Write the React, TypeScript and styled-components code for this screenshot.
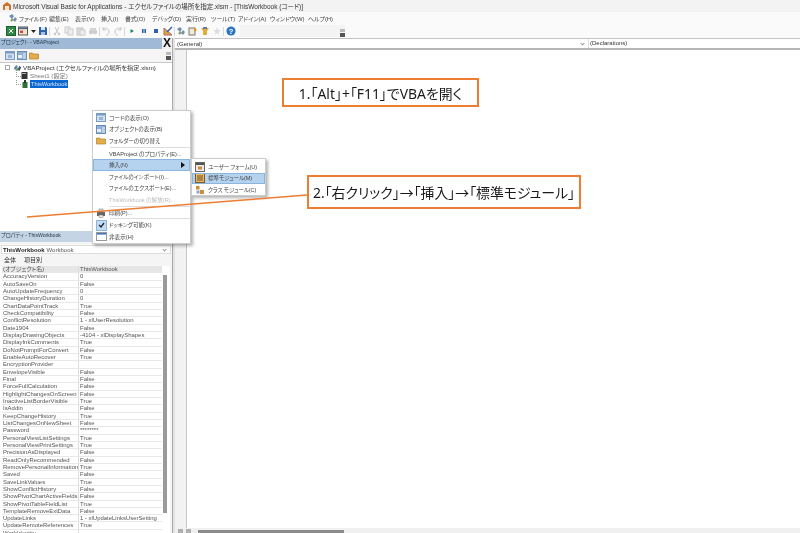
import React from 'react';
import styled, { createGlobalStyle } from 'styled-components';

const Global = createGlobalStyle`
  html, body { margin: 0; padding: 0; background: #fff; }
  #root { width: 800px; height: 533px; overflow: hidden; }
  * { box-sizing: border-box; }
`;
const UI = `"Liberation Sans", "Noto Sans CJK JP", sans-serif`;

const Page = styled.div`
  position: relative; width: 800px; height: 533px; overflow: hidden;
  display: flex; flex-direction: column; font-family: ${UI}; font-size: 6px; color: #333;
  font-feature-settings: "palt"; filter: blur(0.3px);
`;
const TitleBar = styled.div`
  height: 12px; flex: none; background: #f3f3f3; display: flex; align-items: center; gap: 0; padding-left: 2px;
  font-size: 6.5px; color: #333; white-space: nowrap;
`;
const TitleIcon = styled.svg` margin-right: 1px; flex: none; `;
const MenuBar = styled.div`
  height: 13px; flex: none; background: #fafafa; display: flex; align-items: center; padding: 0 0 1px 6px; white-space: nowrap;
`;
const MenuItem = styled.span<{ $w: number }>` width: ${p => p.$w}px; flex: none; color: #444; font-size: 5.9px; `;
const ToolBar = styled.div`
  height: 13px; flex: none; background: #fafafa; display: flex; align-items: center; padding: 0 0 1px 6px; gap: 2px;
`;
const ToolIcon = styled.span<{ $w?: number }>` width: ${p => p.$w ?? 10}px; height: 10px; flex: none; display: flex; align-items: center; justify-content: center; `;
const ToolSep = styled.span` width: 1px; height: 9px; background: #d8d8d8; flex: none; margin: 0 -.75px; `;
const ToolRest = styled.span`
  width: 105px; height: 12px; flex: none; background: #f4f4f4; margin-left: 2px; display: flex; justify-content: flex-end; align-items: flex-end; padding-right: 0;
`;
const Grip = styled.span` width: 5px; height: 8px; flex: none; background: linear-gradient(#bbb 0 3px, transparent 3px 4px, #555 4px); `;
const Main = styled.div` flex: 1; min-height: 0; display: flex; background: #d4d4d4; `;
const LeftColumn = styled.div` width: 172px; flex: none; display: flex; flex-direction: column; background: #f5f5f5; `;
const PaneHeader = styled.div`
  height: 11px; flex: none; background: #9fb9d6; display: flex; align-items: center; justify-content: space-between; font-size: 5.2px; letter-spacing: -.05px; padding-left: 1px;
  color: #26384d; line-height: 8px;
`;
const HeaderLabel = styled.span` align-self: flex-start; padding-top: 0; `;
const CloseBox = styled.span` width: 10px; height: 11px; background: #f0f0f0; color: #111; font: bold 12px/11px "Liberation Sans", sans-serif; letter-spacing: 0; text-align: center; `;
const ProjectTools = styled.div` height: 13px; flex: none; display: flex; align-items: center; gap: 2px; padding: 0 1px 0 5px; background: #f5f5f5; `;
const Spacer = styled.span` flex: 1; `;
const Tree = styled.div` height: 169px; flex: none; background: #fff; border-top: 1px solid #c8c8c8; padding: 0 0 0 5px; `;
const TreeRow = styled.div<{ $indent: number }>` height: 8.6px; display: flex; align-items: center; gap: 1px; padding-left: ${p => p.$indent}px; white-space: nowrap; color: #333; font-size: 6.2px; `;
const Branch = styled.span` width: 5px; height: 5px; flex: none; align-self: flex-start; border-left: 1px dotted #999; border-bottom: 1px dotted #999; margin-right: -1px; `;
const Selected = styled.span` background: #0a66d0; color: #dbe9fb; padding: 0 1px; line-height: 8px; font-size: 5.7px; `;
const Muted = styled.span` color: #777; `;
const Expander = styled.span` width: 5px; height: 5px; border: 1px solid #aaa; margin-right: 2px; flex: none; `;
const PropsHeader = styled(PaneHeader)` background: #c5d4e5; `;
const PropsPanel = styled.div` flex: 1; min-height: 0; display: flex; flex-direction: column; overflow: hidden; `;
const ObjectCombo = styled.div`
  height: 9px; margin: 3px 1px 0 1px; background: #fff; border: 1px solid #ddd; display: flex; align-items: center; justify-content: space-between; padding: 0 2px 0 1px; flex: none; color: #555; white-space: nowrap;
`;
const Bold = styled.b` color: #222; margin-right: 2px; `;
const Chevron = styled.span` width: 3px; height: 3px; border: solid #999; border-width: 0 1px 1px 0; transform: rotate(45deg); margin: 0 2px 1px; flex: none; `;
const Tabs = styled.div` height: 12px; flex: none; display: flex; gap: 8px; align-items: center; padding: 0 0 1px 4px; font-size: 6px; color: #333; `;
const PropsBody = styled.div` flex: 1; min-height: 0; display: flex; background: #fff; margin-right: 2px; `;
const Grid = styled.div` width: 160px; flex: none; margin-left: 2px; `;
const PropRow = styled.div<{ $sel?: boolean }>`
  height: 7.33px; display: grid; grid-template-columns: 77px 1fr; font-size: 5.95px; line-height: 7.2px; color: #555; white-space: nowrap;
  background: ${p => (p.$sel ? '#e6e6e6' : '#fff')};
  border-bottom: 0.5px solid #e8e8e8;
`;
const PropName = styled.span` border-right: 1px solid #dcdcdc; padding-left: 1px; overflow: hidden; `;
const PropValue = styled.span` padding-left: 1px; overflow: hidden; `;
const ScrollTrack = styled.div` width: 8px; flex: none; background: #fff; padding: 9px 3px 20px 1px; `;
const ScrollThumb = styled.div` height: 100%; background: #9a9a9a; `;
const Splitter = styled.div` width: 3px; flex: none; background: #e2e2e2; border-left: 1px solid #aaa; `;
const CodePane = styled.div` flex: 1; min-width: 0; display: flex; flex-direction: column; background: #fff; `;
const ComboRow = styled.div` height: 12px; flex: none; display: flex; background: #fff; border-top: 1px solid #c4c4c4; border-bottom: 2px solid #b5b5b5; `;
const Combo = styled.div<{ $w: number }>` width: ${p => p.$w}px; flex: none; display: flex; align-items: center; justify-content: space-between; padding: 0 2px; color: #333; border-right: 1px solid #ddd; font-size: 6px; `;
const ComboLast = styled.div` flex: 1; padding-left: 1px; line-height: 9px; color: #333; font-size: 6px; `;
const EditorArea = styled.div` flex: 1; display: flex; min-height: 0; `;
const Margin = styled.div` width: 12px; flex: none; background: #f2f2f2; border-right: 1px solid #c8c8c8; `;
const Editor = styled.div` flex: 1; background: #fff; `;
const BottomBar = styled.div` height: 5px; flex: none; background: #f0f0f0; display: flex; align-items: flex-end; padding-left: 3px; `;
const ViewButton = styled.span` width: 5px; height: 4px; background: #b0b0b0; flex: none; margin-right: 3px; `;
const HScrollThumb = styled.span` width: 146px; height: 3px; background: #8a8a8a; flex: none; margin-left: 4px; `;

const ContextMenu = styled.div`
  position: absolute; left: 92px; top: 110px; width: 99px; height: 134px; background: #fff; border: 1px solid #ccc; padding-top: 1px;
  box-shadow: 2px 2px 3px rgba(0,0,0,.3); display: flex; flex-direction: column; color: #444;
`;
const Sub = styled(ContextMenu)` left: 191px; top: 158px; width: 75px; height: 38px; padding-top: 2px; letter-spacing: -.15px; `;
const MenuRow = styled.div<{ $hot?: boolean; $off?: boolean }>`
  height: 11.6px; flex: none; display: flex; align-items: center; white-space: nowrap; font-size: 5.6px; position: relative;
  color: ${p => (p.$off ? '#bbb' : '#444')};
  background: ${p => (p.$hot ? '#b5d3ee' : 'transparent')};
  outline: ${p => (p.$hot ? '1px solid #8ab6de' : 'none')}; outline-offset: -1px;
`;
const MenuGlyph = styled.span<{ $w: number }>` width: ${p => p.$w}px; flex: none; display: flex; justify-content: center; align-items: center; `;
const Arrow = styled.span` position: absolute; right: 5px; top: 3px; width: 0; height: 0; border-left: 4px solid #111; border-top: 3px solid transparent; border-bottom: 3px solid transparent; `;
const MenuSep = styled.div` height: 1px; margin: 0 0 0 17px; background: #ddd; flex: none; `;
const Check = styled.span` width: 11px; height: 11px; background: #c4dcf2; border: 1px solid #8ab6de; display: flex; align-items: center; justify-content: center; `;

const Callout = styled.div<{ $l: number; $t: number; $w: number; $h: number }>`
  position: absolute; left: ${p => p.$l}px; top: ${p => p.$t}px; width: ${p => p.$w}px; height: ${p => p.$h}px;
  background: #fff; border: 2px solid #ed7d31; font-family: "Noto Sans", "Noto Sans CJK JP", sans-serif; font-size: 13.9px; color: #1a1a1a; display: flex; align-items: center; justify-content: center; white-space: nowrap;
`;
const LeaderLine = styled.svg` position: absolute; left: 0; top: 0; pointer-events: none; `;

type IcoProps = { k: string };
const Ico: React.FC<IcoProps> = ({ k }) => {
  switch (k) {
    case 'excel': return <svg width="10" height="10" viewBox="0 0 10 10"><rect x=".5" y=".5" width="9" height="9" fill="#2f8a46" stroke="#1f5e30"/><path d="M3 3l4 4M7 3L3 7" stroke="#fff"/></svg>;
    case 'form': return <svg width="10" height="10" viewBox="0 0 10 10"><rect x=".5" y="1" width="9" height="8" fill="#f2e3c8" stroke="#555"/><rect x="1" y="1.5" width="8" height="1.6" fill="#45688f"/><rect x="2" y="4.5" width="3" height="2.5" fill="#c0504d"/></svg>;
    case 'save': return <svg width="10" height="10" viewBox="0 0 10 10"><path d="M1 1h7l1 1v7H1z" fill="#2e62b0"/><rect x="3" y="1" width="4" height="3" fill="#dbe6f5"/><rect x="3" y="6" width="4" height="3" fill="#a9c0e0"/></svg>;
    case 'caret': return <svg width="5" height="10" viewBox="0 0 5 10"><path d="M0 4h5L2.5 7z" fill="#222"/></svg>;
    case 'cut': return <svg width="10" height="10" viewBox="0 0 10 10"><path d="M3 1l3 6M7 1L4 7" stroke="#c8c8c8" fill="none"/><circle cx="3" cy="8" r="1.2" fill="#c8c8c8"/><circle cx="7" cy="8" r="1.2" fill="#c8c8c8"/></svg>;
    case 'copy': return <svg width="10" height="10" viewBox="0 0 10 10"><rect x="1" y="1" width="5" height="6" fill="#eee" stroke="#ccc"/><rect x="4" y="3" width="5" height="6" fill="#eee" stroke="#ccc"/></svg>;
    case 'paste': return <svg width="10" height="10" viewBox="0 0 10 10"><rect x="1" y="2" width="6" height="7" fill="#ddd" stroke="#c4c4c4"/><rect x="4" y="4" width="5" height="5" fill="#eee" stroke="#ccc"/></svg>;
    case 'find': return <svg width="10" height="10" viewBox="0 0 10 10"><circle cx="3" cy="6" r="2.2" fill="#ccc"/><circle cx="7" cy="6" r="2.2" fill="#ccc"/><rect x="2" y="2" width="6" height="3" fill="#d4d4d4"/></svg>;
    case 'undo': return <svg width="10" height="10" viewBox="0 0 10 10"><path d="M2 3c3-2 6 0 6 3s-2 3-3 3M2 1v3h3" stroke="#c6c6c6" fill="none"/></svg>;
    case 'redo': return <svg width="10" height="10" viewBox="0 0 10 10"><path d="M8 3C5 1 2 3 2 6s2 3 3 3M8 1v3H5" stroke="#c6c6c6" fill="none"/></svg>;
    case 'run': return <svg width="10" height="10" viewBox="0 0 10 10"><path d="M3.5 3l3.5 2-3.5 2z" fill="#148a5a"/></svg>;
    case 'pause': return <svg width="10" height="10" viewBox="0 0 10 10"><rect x="3" y="3" width="1.6" height="4" fill="#2e62b0"/><rect x="5.4" y="3" width="1.6" height="4" fill="#2e62b0"/></svg>;
    case 'stop': return <svg width="10" height="10" viewBox="0 0 10 10"><rect x="3" y="3" width="4" height="4" fill="#2e62b0"/></svg>;
    case 'design': return <svg width="10" height="10" viewBox="0 0 10 10"><path d="M1 9V2l8 7z" fill="#e8a33a" stroke="#a66"/><path d="M4 6l5-5" stroke="#2e62b0" strokeWidth="1.5"/></svg>;
    case 'project': return <svg width="10" height="10" viewBox="0 0 10 10"><path d="M1 3l3-2 2 2-2 3zM5 7l2-3 2 2-2 3z" fill="#6f8fb5"/><path d="M3 8l2-2" stroke="#7a9a4a" strokeWidth="2"/></svg>;
    case 'props': return <svg width="10" height="10" viewBox="0 0 10 10"><rect x="1" y="2" width="6" height="7" fill="#f0ead8" stroke="#777"/><path d="M6 1l3 3-3 2z" fill="#d59a2f"/></svg>;
    case 'tool': return <svg width="10" height="10" viewBox="0 0 10 10"><path d="M1 2h8L7 5v4H3V5z" fill="#e0ac3c"/><rect x="3" y="1" width="4" height="2" fill="#5b7fad"/></svg>;
    case 'toolbox': return <svg width="10" height="10" viewBox="0 0 10 10"><path d="M5 1l1 3 3 0-2.5 2L7.5 9 5 7 2.5 9l1-3L1 4l3 0z" fill="#ddd"/></svg>;
    case 'help': return <svg width="10" height="10" viewBox="0 0 10 10"><circle cx="5" cy="5" r="4.6" fill="#2f74c0"/><text x="5" y="8" fontSize="7.5" fontWeight="700" textAnchor="middle" fill="#fff" fontFamily="Liberation Sans">?</text></svg>;
    case 'code': return <svg width="10" height="9" viewBox="0 0 10 9"><rect x=".5" y=".5" width="9" height="8" fill="#cfe0f2" stroke="#7a9cc0"/><rect x="1" y="1" width="8" height="1.5" fill="#7a9cc0"/><rect x="3" y="4" width="4" height="3" fill="#9ab4d2"/></svg>;
    case 'object': return <svg width="10" height="9" viewBox="0 0 10 9"><rect x=".5" y=".5" width="9" height="8" fill="#8fb2d6" stroke="#6a8db2"/><rect x="1" y="4" width="4" height="3" fill="#e6eef7"/><path d="M6 3h3M6 5h3M6 7h3" stroke="#e6eef7"/></svg>;
    case 'folder': return <svg width="10" height="9" viewBox="0 0 10 9"><path d="M.5 2h3l1 1h5v5h-9z" fill="#e4ac4a" stroke="#b57f28" strokeWidth=".7"/></svg>;
    case 'print': return <svg width="10" height="10" viewBox="0 0 10 10"><rect x="1" y="4" width="8" height="4" fill="#666"/><rect x="3" y="1" width="4" height="3" fill="#ddd" stroke="#777" strokeWidth=".5"/><rect x="3" y="7" width="4" height="2.5" fill="#eee" stroke="#777" strokeWidth=".5"/></svg>;
    case 'hide': return <svg width="11" height="9" viewBox="0 0 11 9"><rect x=".5" y=".5" width="10" height="8" fill="#fff" stroke="#999"/><rect x="1" y="1" width="9" height="1.6" fill="#3e7cc0"/></svg>;
    case 'userform': return <svg width="10" height="10" viewBox="0 0 10 10"><rect x=".5" y=".5" width="9" height="9" fill="#ececec" stroke="#666"/><rect x="1" y="1" width="8" height="2" fill="#555"/><rect x="3" y="4.5" width="4" height="3" fill="#d18a38"/></svg>;
    case 'module': return <svg width="10" height="10" viewBox="0 0 10 10"><rect x=".5" y=".5" width="9" height="9" fill="#eab96b" stroke="#7d5a2a"/><path d="M2 3h6M2 5h6M2 7h6" stroke="#6d4f23"/></svg>;
    case 'class': return <svg width="10" height="10" viewBox="0 0 10 10"><rect x="1" y="1" width="3.5" height="3.5" fill="#d18a38"/><rect x="5" y="5" width="4" height="4" fill="#d18a38"/><rect x="1.5" y="5.5" width="3" height="3" fill="#8aa6c8"/></svg>;
    case 'vba': return <svg width="9" height="9" viewBox="0 0 11 10"><path d="M1 6l3-4 2 2-3 4z" fill="#5a7fa8"/><path d="M5 8l3-5 2 2-2 4z" fill="#44566b"/><path d="M4 9l2-3" stroke="#5f9e4a" strokeWidth="2"/></svg>;
    case 'sheet': return <svg width="8" height="9" viewBox="0 0 8 9"><rect x=".5" y="1" width="6" height="7" fill="#333"/><rect x="1" y="2" width="4" height="1" fill="#aaa"/></svg>;
    case 'book': return <svg width="8" height="9" viewBox="0 0 8 9"><rect x="1.5" y="2" width="5" height="6" fill="#2f6f3a"/><path d="M3 0v3h2V0" fill="#333"/></svg>;
    default: return null;
  }
};

const menus: [string, number][] = [['ファイル(F)', 30], ['編集(E)', 26], ['表示(V)', 26], ['挿入(I)', 24], ['書式(O)', 27], ['デバッグ(D)', 34], ['実行(R)', 25], ['ツール(T)', 27], ['アドイン(A)', 32], ['ウィンドウ(W)', 38], ['ヘルプ(H)', 30]];
const tools = ['excel', 'form', 'caret', 'save', '|', 'cut', 'copy', 'paste', 'find', '|', 'undo', 'redo', '|', 'run', 'pause', 'stop', 'design', '|', 'project', 'props', 'tool', 'toolbox', '|', 'help'];
const props: [string, string][] = [
  ['(オブジェクト名)', 'ThisWorkbook'], ['AccuracyVersion', '0'], ['AutoSaveOn', 'False'], ['AutoUpdateFrequency', '0'], ['ChangeHistoryDuration', '0'], ['ChartDataPointTrack', 'True'], ['CheckCompatibility', 'False'], ['ConflictResolution', '1 - xlUserResolution'], ['Date1904', 'False'], ['DisplayDrawingObjects', '-4104 - xlDisplayShapes'], ['DisplayInkComments', 'True'], ['DoNotPromptForConvert', 'False'], ['EnableAutoRecover', 'True'], ['EncryptionProvider', ''], ['EnvelopeVisible', 'False'], ['Final', 'False'], ['ForceFullCalculation', 'False'], ['HighlightChangesOnScreen', 'False'], ['InactiveListBorderVisible', 'True'], ['IsAddin', 'False'], ['KeepChangeHistory', 'True'], ['ListChangesOnNewSheet', 'False'], ['Password', '********'], ['PersonalViewListSettings', 'True'], ['PersonalViewPrintSettings', 'True'], ['PrecisionAsDisplayed', 'False'], ['ReadOnlyRecommended', 'False'], ['RemovePersonalInformation', 'True'], ['Saved', 'False'], ['SaveLinkValues', 'True'], ['ShowConflictHistory', 'False'], ['ShowPivotChartActiveFields', 'False'], ['ShowPivotTableFieldList', 'True'], ['TemplateRemoveExtData', 'False'], ['UpdateLinks', '1 - xlUpdateLinksUserSetting'], ['UpdateRemoteReferences', 'True'], ['WorkIdentity', ''],
];
type MI = { t?: string; i?: string; hot?: boolean; off?: boolean; arrow?: boolean; check?: boolean; sep?: boolean };
const ctx: MI[] = [
  { t: 'コードの表示(O)', i: 'code' }, { t: 'オブジェクトの表示(B)', i: 'object' }, { t: 'フォルダーの切り替え', i: 'folder' }, { sep: true },
  { t: 'VBAProject のプロパティ(E)...' }, { t: '挿入(N)', hot: true, arrow: true }, { t: 'ファイルのインポート(I)...' }, { t: 'ファイルのエクスポート(E)...' },
  { t: 'ThisWorkbook の解放(R)...', off: true }, { sep: true }, { t: '印刷(P)...', i: 'print' }, { sep: true }, { t: 'ドッキング可能(K)', check: true }, { t: '非表示(H)', i: 'hide' },
];
const sub: MI[] = [{ t: 'ユーザー フォーム(U)', i: 'userform' }, { t: '標準モジュール(M)', i: 'module', hot: true }, { t: 'クラス モジュール(C)', i: 'class' }];

const MenuRows: React.FC<{ items: MI[]; gutter: number }> = ({ items, gutter }) => (
  <>
    {items.map((m, i) => m.sep ? <MenuSep key={i} /> : (
      <MenuRow key={i} $hot={m.hot} $off={m.off}>
        <MenuGlyph $w={gutter}>
          {m.check ? <Check><svg width="7" height="6" viewBox="0 0 7 6"><path d="M1 3l2 2 3-4" stroke="#223" strokeWidth="1.3" fill="none"/></svg></Check> : m.i ? <Ico k={m.i} /> : null}
        </MenuGlyph>
        {m.t}
        {m.arrow && <Arrow />}
      </MenuRow>
    ))}
  </>
);

export default function App() {
  return (
    <Page>
      <Global />
      <TitleBar>
        <TitleIcon width="10" height="10" viewBox="0 0 10 10"><path d="M1 4l4-3 4 3v5H1z" fill="#c9752f"/><rect x="3" y="5" width="4" height="4" fill="#f3e7d3"/></TitleIcon>
        Microsoft Visual Basic for Applications - エクセルファイルの場所を指定.xlsm - [ThisWorkbook (コード)]
      </TitleBar>
      <MenuBar>
        <ToolIcon $w={13}><Ico k="project" /></ToolIcon>
        {menus.map(([t, w]) => <MenuItem key={t} $w={w}>{t}</MenuItem>)}
      </MenuBar>
      <ToolBar>
        {tools.map((k, i) => k === '|' ? <ToolSep key={i} /> : <ToolIcon key={i} $w={k === 'caret' ? 6 : 10}><Ico k={k} /></ToolIcon>)}
        <ToolRest><Grip /></ToolRest>
      </ToolBar>
      <Main>
        <LeftColumn>
          <PaneHeader><HeaderLabel>プロジェクト - VBAProject</HeaderLabel><CloseBox>X</CloseBox></PaneHeader>
          <ProjectTools>
            <ToolIcon><Ico k="code" /></ToolIcon>
            <ToolIcon><Ico k="object" /></ToolIcon>
            <ToolIcon><Ico k="folder" /></ToolIcon>
            <Spacer /><Grip />
          </ProjectTools>
          <Tree>
            <TreeRow $indent={0}><Expander /><Ico k="vba" />VBAProject (エクセルファイルの場所を指定.xlsm)</TreeRow>
            <TreeRow $indent={11}><Branch /><Ico k="sheet" /><Muted>Sheet1 (設定)</Muted></TreeRow>
            <TreeRow $indent={11}><Branch /><Ico k="book" /><Selected>ThisWorkbook</Selected></TreeRow>
          </Tree>
          <PropsHeader><HeaderLabel>プロパティ - ThisWorkbook</HeaderLabel></PropsHeader>
          <PropsPanel>
            <ObjectCombo><span><Bold>ThisWorkbook</Bold>Workbook</span><Chevron /></ObjectCombo>
            <Tabs><span>全体</span><span>項目別</span></Tabs>
            <PropsBody>
              <Grid>
                {props.map(([n, v], i) => (
                  <PropRow key={n} $sel={i === 0}>
                    <PropName>{n}</PropName>
                    <PropValue>{v}</PropValue>
                  </PropRow>
                ))}
              </Grid>
              <ScrollTrack><ScrollThumb /></ScrollTrack>
            </PropsBody>
          </PropsPanel>
        </LeftColumn>
        <Splitter />
        <CodePane>
          <ComboRow>
            <Combo $w={414}>(General)<Chevron /></Combo>
            <ComboLast>(Declarations)</ComboLast>
          </ComboRow>
          <EditorArea>
            <Margin />
            <Editor />
          </EditorArea>
          <BottomBar><ViewButton /><ViewButton /><HScrollThumb /></BottomBar>
        </CodePane>
      </Main>

      <ContextMenu><MenuRows items={ctx} gutter={16} /></ContextMenu>
      <Sub><MenuRows items={sub} gutter={16} /></Sub>
      <LeaderLine width="800" height="533" viewBox="0 0 800 533">
        <line x1="27" y1="217" x2="307" y2="195" stroke="#ed7d31" strokeWidth="1.5" />
      </LeaderLine>
      <Callout $l={282} $t={78} $w={197} $h={29}>1.「Alt」+「F11」でVBAを開く</Callout>
      <Callout $l={307} $t={175} $w={274} $h={34}>2.「右クリック」→「挿入」→「標準モジュール」</Callout>
    </Page>
  );
}
